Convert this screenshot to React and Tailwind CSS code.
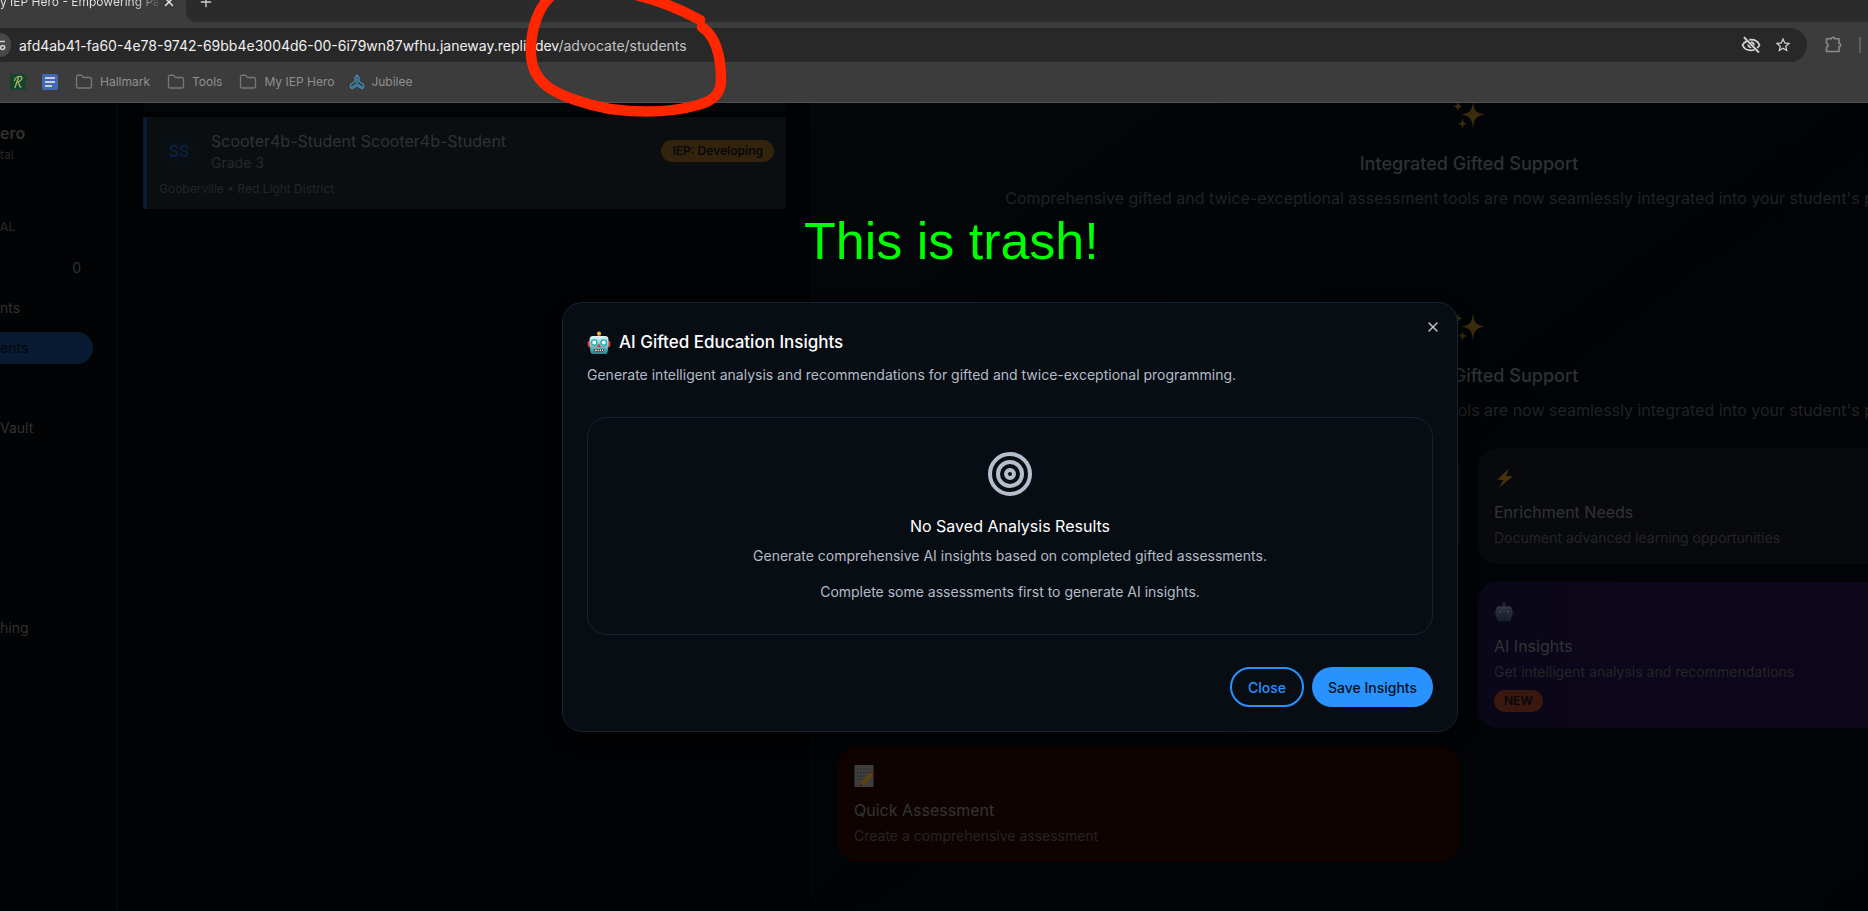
import React from "react";
import { Target, X, Plus, Folder } from "lucide-react";

function Robot({ className }) {
  return (
    <svg viewBox="0 0 24 24" className={className} aria-hidden="true">
      <defs>
        <linearGradient id="robotFace" x1="0" y1="0" x2="0" y2="1">
          <stop offset="0" stopColor="#dff6f8" />
          <stop offset="0.45" stopColor="#8fc9cf" />
          <stop offset="1" stopColor="#2b8087" />
        </linearGradient>
      </defs>
      <rect x="10.5" y="2.5" width="3" height="4" fill="#7d4aa0" />
      <circle cx="12" cy="2.6" r="2" fill="#f6b21b" />
      <rect x="0.6" y="10" width="3" height="6" rx="1.4" fill="#e0332f" />
      <rect x="20.4" y="10" width="3" height="6" rx="1.4" fill="#e0332f" />
      <path d="M6 5h12c2.500 0 3.500 1.500 3.500 4v6l-1 6c-.3 1.500-1 2-2.500 2H6c-1.500 0-2.200-.5-2.500-2l-1-6V9c0-2.500 1-4 3.500-4z" fill="url(#robotFace)" />
      <circle cx="7.300" cy="11.500" r="2.700" fill="#fff" stroke="#1fa6bd" strokeWidth="1.300" />
      <circle cx="16.700" cy="11.500" r="2.700" fill="#fff" stroke="#1fa6bd" strokeWidth="1.300" />
      <path d="M12 12.500l2 3.500h-4z" fill="#e0332f" />
      <rect x="7" y="18" width="10" height="2.600" rx="0.800" fill="#4a3436" />
      <path d="M8 19.300h1.600M10.600 19.300h1.200M12.800 19.300h1.200M15 19.300h1.200" stroke="#e9f6f6" strokeWidth="1.500" />
    </svg>
  );
}

function Sparkles({ className }) {
  return (
    <svg viewBox="0 0 32 32" className={className} fill="#3a2c0d" aria-hidden="true">
      <path d="M20 1c.8 10.500 2.500 13 12 14.500C22.500 17 20.800 20 20 30.500 19.200 20 17.500 17 8 15.500 17.500 14 19.200 11.500 20 1z" />
      <path d="M5 1.500c.4 4.200 1 5.200 5 6-4 .7-4.600 1.800-5 6-.4-4.200-1-5.300-5-6 4-.8 4.600-1.800 5-6z" />
      <path d="M9.500 18.500c.4 4.500 1.100 5.600 5 6.300-3.900.7-4.600 1.900-5 6.400-.4-4.500-1.100-5.700-5-6.400 3.900-.7 4.600-1.800 5-6.300z" />
    </svg>
  );
}

function Bolt({ className }) {
  return (
    <svg viewBox="0 0 24 24" className={className} aria-hidden="true">
      <path d="M16.500 1.500L3.500 14l7 .2L5 23 20.500 10l-7.500-.2z" fill="#4a330c" />
    </svg>
  );
}

function Memo({ className }) {
  return (
    <svg viewBox="0 0 24 24" className={className} aria-hidden="true">
      <rect x="0.500" y="1" width="19" height="22" fill="#3d3d3d" />
      <path d="M3 5h13M3 8.500h13M3 12h8M3 15.500h6" stroke="#2c2c2c" strokeWidth="1" strokeDasharray="2 1" />
      <path d="M16 8.500l3 2.200-8 10-4.500 1.500.8-4z" fill="#5c4508" />
      <path d="M16 8.500l1.200-1.500 2.600 2-1 1.600z" fill="#5a2020" />
      <path d="M6.500 22.200l.4-1.900 1.600 1.200z" fill="#111" />
    </svg>
  );
}

function HiddenEye() {
  return (
    <svg viewBox="0 0 24 24" className="h-5 w-5" fill="none" stroke="currentColor" strokeWidth="2.200" aria-hidden="true">
      <path d="M7.500 7C4.500 8.300 2.600 10 1.800 12c1.700 4 5.700 6.500 10.200 6.500 1.500 0 2.900-.3 4.200-.8M10 5.700c.7-.1 1.300-.2 2-.2 4.500 0 8.500 2.500 10.200 6.500-.6 1.400-1.500 2.600-2.700 3.600" />
      <path d="M8 10.500c-1 3 1.500 6 5 5.200z" fill="currentColor" stroke="none" />
      <path d="M12 8.600a3.500 3.500 0 013.500 3.600" />
      <path d="M3.500 2.500l18 18.500" />
    </svg>
  );
}

function StarIcon() {
  return (
    <svg viewBox="0 0 24 24" className="h-[18px] w-[18px]" fill="currentColor" aria-hidden="true">
      <path d="M22 9.240l-7.190-.62L12 2 9.190 8.630 2 9.240l5.460 4.730L5.820 21 12 17.270 18.180 21l-1.630-7.030L22 9.240zM12 15.400l-3.760 2.270 1-4.280-3.320-2.880 4.380-.38L12 6.100l1.710 4.040 4.380.38-3.320 2.880 1 4.280L12 15.400z" />
    </svg>
  );
}

function Puzzle() {
  return (
    <svg viewBox="0 0 20 20" className="h-5 w-5" fill="none" stroke="currentColor" strokeWidth="1.600" strokeLinejoin="round" aria-hidden="true">
      <path d="M3.500 3.800h5c0-2 3-2 3 0H16v4.700c2.300 0 2.300 3 0 3v5H3.500v-4.300c2.200-.8 2.200-3.200 0-4z" />
    </svg>
  );
}

function Jubilee() {
  return (
    <svg viewBox="0 0 16 16" className="h-4 w-4" fill="none" stroke="#3c8fb8" strokeWidth="1.300" strokeLinejoin="round" aria-hidden="true">
      <path d="M6 8V3.500L8 1l2 2.500V8M8 4v6" />
      <path d="M6 7.500L2 10l-1 2.800M8 10L2.500 13.200M1 12.800l2 1.900L8 11.800" />
      <path d="M10 7.500l4 2.500 1 2.800M8 10l5.500 3.200M15 12.800l-2 1.900-5-2.900" />
    </svg>
  );
}

function Chrome() {
  return (
    <header className="shrink-0 border-b border-[#525452] bg-[#3c3c3c]">
      <div className="flex h-[22px] overflow-hidden bg-[#3c3c3c]">
        <div className="flex w-[186px] shrink-0 items-start">
          <div className="-mt-4 flex h-9 w-full items-center">
            <span className="w-[158px] whitespace-nowrap bg-linear-to-r from-[#e4e4e4] from-85% to-[#5c5c5c] bg-clip-text text-[12px] text-transparent">
              y IEP Hero - Empowering Pa
            </span>
            <button aria-label="Close tab" className="ml-1 text-[#e4e4e4]">
              <X size={14} strokeWidth={2.5} />
            </button>
          </div>
        </div>
        <div className="flex flex-1 items-start rounded-bl-[10px] bg-[#2b2b2b]">
          <button aria-label="New tab" className="-mt-4 ml-3 flex h-9 items-center text-[#d0d0d0]">
            <Plus size={16} strokeWidth={2} />
          </button>
        </div>
      </div>
      <div className="flex items-center pt-1.5 text-[#8a8a8a]">
        <div className="flex h-[34px] flex-1 items-center rounded-r-full bg-[#282828] pr-[15px]">
          <span className="flex h-6 w-[11px] shrink-0 items-center overflow-hidden rounded-r-full bg-[#474747]">
            <svg viewBox="0 0 6 12" className="h-3 w-1.5" fill="none" stroke="#d0d0d0" strokeWidth="1.600" aria-hidden="true">
              <path d="M0 2.500h5" />
              <circle cx="2.600" cy="8.500" r="2" />
            </svg>
          </span>
          <p className="ml-2 flex-1 whitespace-nowrap text-[14px] text-[#f0f0f0]">
            afd4ab41-fa60-4e78-9742-69bb4e3004d6-00-6i79wn87wfhu.janeway.replit.dev
            <span className="text-[#c4c4c4]">/advocate/students</span>
          </p>
          <div className="flex items-center gap-[13px] text-[#d4d4d4]">
            <button aria-label="Tracking blocked"><HiddenEye /></button>
            <button aria-label="Bookmark"><StarIcon /></button>
          </div>
        </div>
        <button aria-label="Extensions" className="ml-4"><Puzzle /></button>
        <div className="ml-4 mr-[7px] h-4 w-0.5 bg-[#5e5e5e]" />
      </div>
      <nav className="flex h-10 items-center pl-2.5 text-[12px] text-[#909090]">
        <a href="#r" aria-label="R" className="mr-4 h-4 w-4 bg-[#15432c]">
          <svg viewBox="0 0 16 16" className="h-4 w-4" fill="none" stroke="#a9b56d" strokeWidth="1.300" strokeLinecap="round" aria-hidden="true">
            <path d="M8.500 3.500L5 13.500M4.500 6.500C5 3.500 8 2.200 10.500 2.500c2.500.4 2 4-2.500 5.500 1.500 1.500.8 4.800 3 5.200" />
          </svg>
        </a>
        <a href="#docs" aria-label="Docs" className="mr-[17px] flex h-4 w-4 flex-col justify-center gap-0.5 rounded-xs bg-[#3f6ab5] px-[3px]">
          <span className="h-0.5 bg-[#c9ccd4]" />
          <span className="h-0.5 bg-[#c9ccd4]" />
          <span className="h-0.5 w-[7px] bg-[#c9ccd4]" />
        </a>
        <a href="#hallmark" className="mr-[17px] flex items-center gap-[7px]"><Folder size={18} strokeWidth={1.800} className="text-[#777777]" />Hallmark</a>
        <a href="#tools" className="mr-[17px] flex items-center gap-[7px]"><Folder size={18} strokeWidth={1.800} className="text-[#777777]" />Tools</a>
        <a href="#iep" className="mr-[15px] flex items-center gap-[7px]"><Folder size={18} strokeWidth={1.800} className="text-[#777777]" />My IEP Hero</a>
        <a href="#jubilee" className="flex items-center gap-1.5"><Jubilee />Jubilee</a>
      </nav>
    </header>
  );
}

function Sidebar() {
  return (
    <aside className="w-[118px] shrink-0 border-r border-[#080a0c] bg-[#020304] pr-6 pt-4 text-[14px] text-[#303132]">
      <p className="text-[16px] leading-7 font-semibold">ero</p>
      <p className="text-[12px] leading-4 text-[#262728]">tal</p>
      <p className="mt-14 text-[12px] leading-4 font-medium text-[#262728]">AL</p>
      <nav className="mt-[17px] flex flex-col gap-2 leading-8">
        <a href="#overview" className="pr-3 text-right">0</a>
        <a href="#parents" className="whitespace-nowrap">nts</a>
        <a href="#students" className="rounded-r-full bg-[#081b33] text-[#020508]">ents</a>
        <span className="h-8" />
        <a href="#vault">Vault</a>
        <span className="h-38" />
        <a href="#coaching">hing</a>
      </nav>
    </aside>
  );
}

function StudentList() {
  return (
    <section className="min-w-0 flex-1 pr-[25px] pl-[25px]">
      <div className="h-2 border-b border-[#07090b] bg-[#030608]" />
      <article className="mt-1.5 border-l-4 border-[#081b33] bg-[#0a0e11] px-3 py-3">
        <div className="flex items-center">
          <div className="flex h-10 w-10 shrink-0 items-center justify-center rounded-full bg-[#0a0f14] text-[16px] font-medium text-[#0a2242]">SS</div>
          <div className="ml-3 flex-1">
            <h3 className="text-[16px] leading-6 text-[#303234]">Scooter4b-Student Scooter4b-Student</h3>
            <p className="text-[14px] leading-5 text-[#26282a]">Grade 3</p>
          </div>
          <span className="rounded-full bg-[#33230c] px-[11px] text-[12px] leading-[22px] font-semibold text-[#05080c]">IEP: Developing</span>
        </div>
        <p className="mt-2 text-[12px] leading-4 text-[#232527]">Gooberville • Red Light District</p>
      </article>
    </section>
  );
}

function SupportIntro() {
  return (
    <div className="text-center">
      <Sparkles className="mx-auto h-8 w-8" />
      <h2 className="mt-[19px] text-[18px] leading-7 font-medium text-[#303132]">Integrated Gifted Support</h2>
      <p className="mt-2 text-[16px] leading-6 text-[#212224]">
        Comprehensive gifted and twice-exceptional assessment tools are now seamlessly integrated into your student's program.
      </p>
    </div>
  );
}

function Card({ className, icon, title, text, badge }) {
  return (
    <article className={`rounded-[20px] p-4 ${className}`}>
      <div className="flex h-7 items-center">{icon}</div>
      <h3 className="mt-2 text-[16px] leading-6 text-[#333436]">{title}</h3>
      <p className="mt-1 text-[14px] leading-5 text-[#242527]">{text}</p>
      {badge && (
        <span className="mt-2 inline-block rounded-full bg-[#3a180f] px-[10px] align-top text-[12px] leading-[22px] font-semibold text-[#06070a]">{badge}</span>
      )}
    </article>
  );
}

function SupportPanel() {
  return (
    <section className="w-[1057px] shrink-0 overflow-hidden rounded-bl-[20px] border-l border-[#070a0c] bg-linear-to-br from-[#040608] via-[#010406] to-[#020306]">
      <div className="w-[1314px] px-[26px]">
        <div className="-mt-1"><SupportIntro /></div>
        <div className="mt-[101px]"><SupportIntro /></div>
        <div className="mt-[26px] grid grid-cols-2 gap-[18px]">
          <div className="rounded-[20px] bg-[#090b0d]" />
          <Card className="bg-[#08090c]" icon={<Bolt className="h-[22px] w-[22px]" />} title="Enrichment Needs" text="Document advanced learning opportunities" />
          <div />
          <Card className="bg-linear-to-r from-[#0a0718] to-[#11061f]" icon={<Robot className="h-5 w-5 opacity-20" />} title="AI Insights" text="Get intelligent analysis and recommendations" badge="NEW" />
          <Card className="bg-[#0f0301]" icon={<Memo className="h-6 w-6" />} title="Quick Assessment" text="Create a comprehensive assessment" />
        </div>
      </div>
    </section>
  );
}

function InsightsDialog() {
  return (
    <div role="dialog" aria-labelledby="insights-title" className="relative w-full max-w-4xl rounded-[20px] border border-[#142433] bg-[#080d14] p-6 shadow-[0_8px_16px_rgba(0,0,0,0.6)]">
      <button aria-label="Close dialog" className="absolute top-4 right-4 text-[#c3c7cc]"><X size={16} /></button>
      <h2 id="insights-title" className="flex h-8 items-center gap-2 text-[17px] font-medium text-[#ffffff]">
        <Robot className="h-6 w-6" />
        AI Gifted Education Insights
      </h2>
      <p className="mt-1.5 text-[14px] leading-5 text-[#b3bcc6]">
        Generate intelligent analysis and recommendations for gifted and twice-exceptional programming.
      </p>
      <div className="mt-8 flex flex-col items-center rounded-[20px] border border-[#142433] p-8 text-center text-[14px] leading-5 text-[#b3bcc6]">
        <Target size={48} className="text-[#b4bfcb]" />
        <h3 className="mt-4 text-[16px] leading-6 text-[#ffffff]">No Saved Analysis Results</h3>
        <p className="mt-2">Generate comprehensive AI insights based on completed gifted assessments.</p>
        <p className="mt-4">Complete some assessments first to generate AI insights.</p>
      </div>
      <div className="mt-8 flex justify-end gap-2 text-[14px] font-medium">
        <button className="h-10 rounded-full border-2 border-[#2892ff] px-4 text-[#2892ff]">Close</button>
        <button className="h-10 rounded-full bg-[#2892ff] px-4 text-[#06101c]">Save Insights</button>
      </div>
    </div>
  );
}

export default function App() {
  return (
    <div className="relative flex h-screen flex-col overflow-hidden bg-[#010203] font-['Inter','Liberation_Sans',sans-serif]">
      <Chrome />
      <main className="relative flex min-h-0 flex-1 overflow-hidden">
        <Sidebar />
        <StudentList />
        <SupportPanel />
        <div className="absolute inset-0 flex items-start justify-center pt-[199px] pl-[152px]">
          <InsightsDialog />
        </div>
        <p className="absolute top-[108px] left-[804px] text-[52px] leading-[60px] text-[#00ff00] font-['Liberation_Sans',sans-serif]">This is trash!</p>
      </main>
      <svg viewBox="0 0 220 130" className="pointer-events-none absolute top-0 left-[520px] h-[130px] w-[220px]" fill="none" stroke="#ff2600" strokeWidth="10.500" strokeLinecap="round" strokeLinejoin="round" aria-hidden="true">
        <path d="M112-6C138 0 160 9 180 20M182 27C195 36 201 55 201 80C201 94 193 101 178 105C150 113 120 113 90 109C68 105 42 97 28 87C15 77 10 65 11 46C12 28 18 8 30-3" />
      </svg>
    </div>
  );
}
